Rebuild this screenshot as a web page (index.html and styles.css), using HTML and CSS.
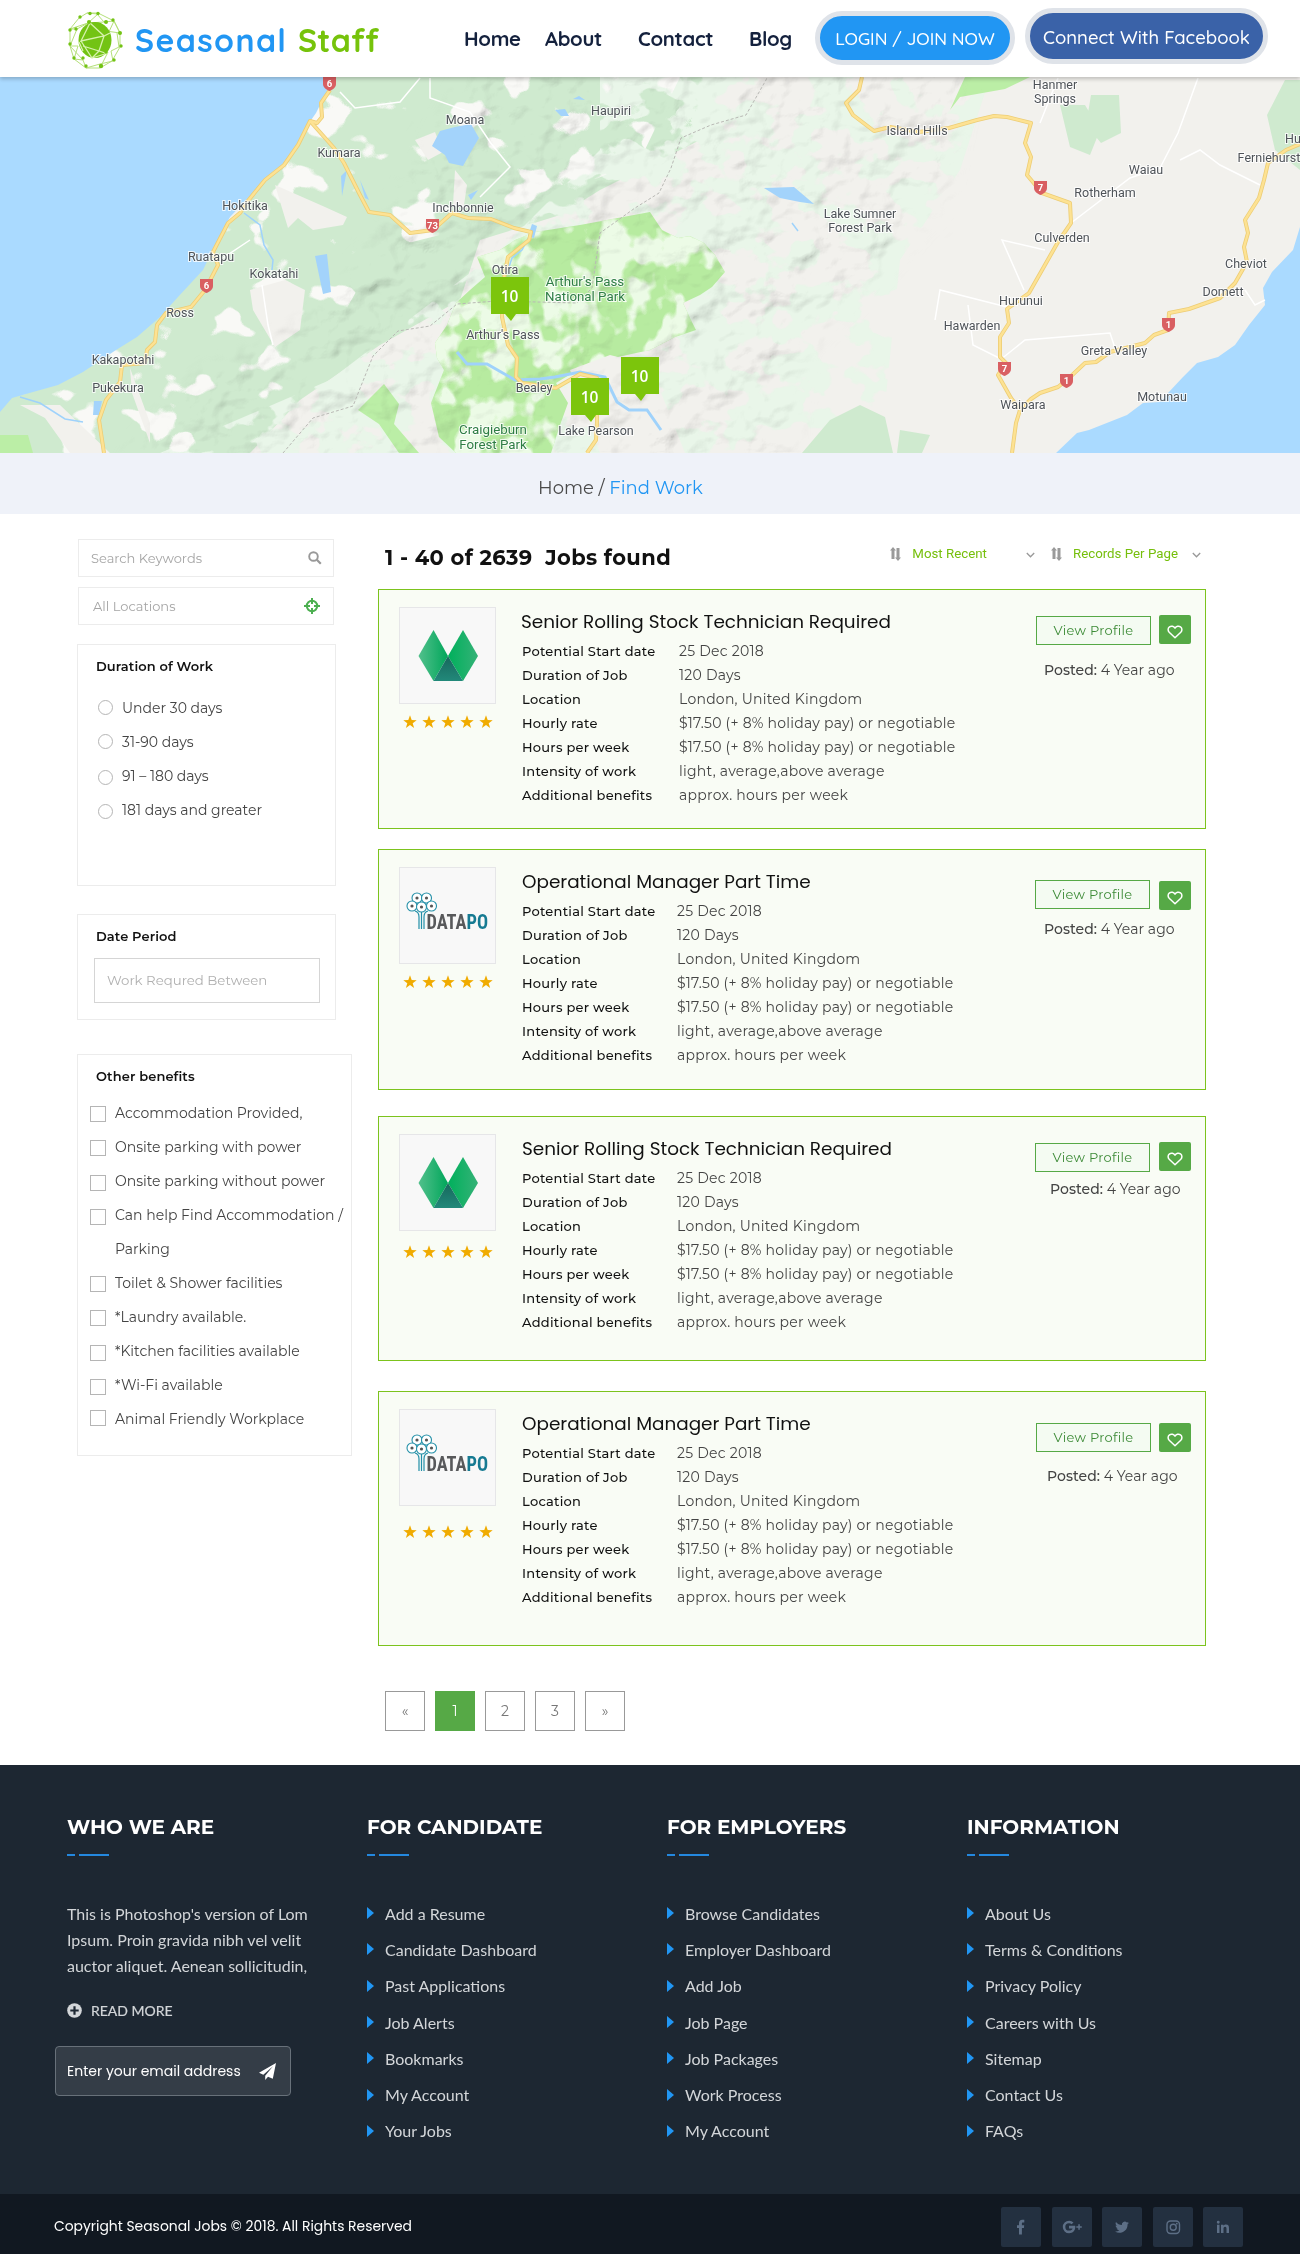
FILE: index.html
```html
<!DOCTYPE html>
<html lang="en">
<head>
<meta charset="utf-8">
<title>Seasonal Staff - Find Work</title>
<link rel="stylesheet" href="styles.css">
</head>
<body>
<svg class="defs" aria-hidden="true">
  <symbol id="star" viewBox="0 0 14 14"><path d="M7 .3L8.700 5l5 .14-4 3.060 1.410 4.760L7 10.100l-4.110 2.860L4.300 8.200l-4-3.060L5.300 5z" fill="#f0ab00"/></symbol>
  <symbol id="stars" viewBox="0 0 90 14"><use href="#star" x="0" width="14" height="14"/><use href="#star" x="19" width="14" height="14"/><use href="#star" x="38" width="14" height="14"/><use href="#star" x="57" width="14" height="14"/><use href="#star" x="76" width="14" height="14"/></symbol>
  <symbol id="heart" viewBox="0 0 16 14"><path d="M8 12.8L2.2 7.2C.5 5.4.9 2.9 2.5 1.8 4.3.6 6.7 1.100 8 3.200 9.300 1.100 11.700.6 13.500 1.800 15.100 2.900 15.500 5.400 13.800 7.200z" fill="none" stroke="#fff" stroke-width="1.5" stroke-linejoin="round"/></symbol>
  <symbol id="sort" viewBox="0 0 11 14"><path d="M3 0l3 3.500H4.500V12H1.500V3.500H0zM8 14l3-3.500H9.500V1H6.500v9.500H5z" fill="#9a9a9a"/></symbol>
  <symbol id="chev" viewBox="0 0 9 6"><path d="M.8 1l3.700 3.800L8.200 1" fill="none" stroke="#999" stroke-width="1.300"/></symbol>
  <symbol id="gem" viewBox="0 0 60 58">
    <linearGradient id="g1"><stop offset="0" stop-color="#52c08c"/><stop offset="1" stop-color="#00a65a"/></linearGradient>
    <linearGradient id="g2"><stop offset="0" stop-color="#00b05c"/><stop offset="1" stop-color="#35b277"/></linearGradient>
    <linearGradient id="g3" x2="0" y2="1"><stop offset="0" stop-color="#17675c"/><stop offset="1" stop-color="#22897a"/></linearGradient>
    <path d="M15.500 3L30 29 15.500 54 .5 29z" fill="url(#g1)"/><path d="M45 3l15 26-15 25-15-25z" fill="url(#g2)"/><path d="M30 29l15 25H15.500z" fill="url(#g3)"/>
  </symbol>
  <symbol id="tree" viewBox="0 0 84 42">
    <g fill="#fff" stroke="#2490a8" stroke-width="1.100"><circle cx="11" cy="7" r="5"/><circle cx="20.500" cy="7" r="5"/><circle cx="6" cy="15" r="5"/><circle cx="25.500" cy="15" r="5"/><circle cx="15.500" cy="16" r="5"/></g>
    <g fill="#555"><circle cx="11" cy="7" r="1.600"/><circle cx="20.500" cy="7" r="1.600"/><circle cx="6" cy="15" r="1.600"/><circle cx="25.500" cy="15" r="1.600"/><circle cx="15.500" cy="16" r="1.600"/></g>
    <path d="M9 20q4 1 4 6v12M22 20q-4 1-4 6v12M15.500 21v17" fill="none" stroke="#2490a8" stroke-width="1.200"/>
  </symbol>
  <symbol id="shield" viewBox="0 0 13 14"><path d="M0 0h13v7c0 3.500-3 5.500-6.500 7C3 12.500 0 10.500 0 7z" fill="#d95f62"/></symbol>
  <symbol id="pin" viewBox="0 0 38 44"><path d="M0 0h38v37H25l-5 7-6-7H0z" fill="#7cc50c"/></symbol>
</svg>

<header class="top">
  <svg class="brand" viewBox="0 0 320 64">
    <g transform="translate(1 4)">
      <g fill="none" stroke="#b5e07a" stroke-width="1"><path d="M19 1l-8 5L2 17v17l4 13 12 9 14 0 12-7 8-14V21L46 9 30 1z"/><path d="M19 1l11 1-10 9L2 17l7 0 11-6 16-1-7-8M36 10l10-1 6 12-14-2M2 34l8 0-4 13 9 1 3 8 14-4 13-3-2-10 8-4-2-14M9 17l-7 17 13 14M46 9l-7 15M32 56l8-16"/></g>
      <ellipse cx="27" cy="28" rx="16.500" ry="18" fill="#73c314"/>
      <g stroke="#d7f2ae" stroke-width="1.300" fill="none"><path d="M22 11l-9 18 23-5-14-13M36 24l-5 15-16-5M13 29l11 17 7-7 9 3M22 11l14 13 6-3M11 30l4 9M24 46l16-5"/></g>
      <g fill="#73c314"><circle cx="22" cy="1.500" r="1.700"/><circle cx="30" cy="1.500" r="1.700"/><circle cx="12" cy="5" r="1.700"/><circle cx="21" cy="10" r="2"/><circle cx="38" cy="10" r="2"/><circle cx="45" cy="8" r="1.700"/><circle cx="2" cy="18" r="1.700"/><circle cx="8" cy="17" r="1.700"/><circle cx="52" cy="21" r="2"/><circle cx="2" cy="32" r="1.700"/><circle cx="53" cy="34" r="1.700"/><circle cx="6" cy="46" r="1.700"/><circle cx="15" cy="46" r="1.700"/><circle cx="18" cy="54" r="1.700"/><circle cx="33" cy="54" r="2.200"/><circle cx="46" cy="48" r="1.700"/><circle cx="38" cy="40" r="1.700"/></g>
    </g>
    <text x="68" y="44" class="brand-text" textLength="151" fill="#2196f3">Seasonal</text>
    <text x="231" y="44" class="brand-text" textLength="81" fill="#76c30b">Staff</text>
  </svg>
  <nav class="nav"><a>Home</a><a>About</a><a>Contact</a><a>Blog</a></nav>
  <a class="pill login">LOGIN / JOIN NOW</a>
  <a class="pill fb">Connect With Facebook</a>
</header>

<svg class="map" viewBox="0 77 1300 376">
  <defs>
    <filter id="patch" x="0" y="0" width="100%" height="100%"><feTurbulence type="fractalNoise" baseFrequency=".022 .028" numOctaves="4" seed="8"/><feColorMatrix values="0 0 0 0 .81  0 0 0 0 .917  0 0 0 0 .81  22 0 0 0 -10.400"/><feComposite in2="SourceGraphic" operator="in"/></filter>
    <filter id="clear" x="0" y="0" width="100%" height="100%"><feTurbulence type="fractalNoise" baseFrequency=".02 .025" numOctaves="3" seed="21"/><feColorMatrix values="0 0 0 0 .949  0 0 0 0 .945  0 0 0 0 .925  25 0 0 0 -14.800"/><feComposite in2="SourceGraphic" operator="in"/></filter>
    <filter id="ridge" x="0" y="0" width="100%" height="100%"><feTurbulence type="fractalNoise" baseFrequency=".035 .03" numOctaves="3" seed="3"/><feColorMatrix values="0 0 0 0 .84  0 0 0 0 .965  0 0 0 0 .79  9 0 0 0 -4.300"/><feComposite in2="SourceGraphic" operator="in"/></filter>
    <filter id="relief" x="0" y="0" width="100%" height="100%"><feTurbulence type="fractalNoise" baseFrequency=".025 .03" numOctaves="3" seed="5"/><feColorMatrix values="0 0 0 0 0 0 0 0 0 0 0 0 0 0 0 1 0 0 0 0"/><feDiffuseLighting surfaceScale="14" diffuseConstant="1.400" lighting-color="#fff"><feDistantLight azimuth="225" elevation="52"/></feDiffuseLighting><feComposite in2="SourceGraphic" operator="in"/></filter>
    <filter id="soft"><feGaussianBlur stdDeviation="12"/></filter>
    <mask id="hills"><path filter="url(#soft)" fill="#fff" d="M480 60H970L940 200 870 280 800 350 790 470H120L200 380 300 330 380 240 420 170z"/></mask>
    <path id="pass" d="M650 212L580 225 535 232 515 240 500 250 477 257 485 277 470 290 456 303 447 325 435 343 437 358 444 370 431 403 439 437 456 453H551L560 425 568 403 556 383 589 363 618 357 650 350 675 337 696 330 690 318 683 303 700 295 712 287 725 272 715 255 704 243 690 236 678 238 662 230z"/>
    <g id="roads" fill="none" stroke-linejoin="round"><path d="M330 90l-9 13 1 14-5 6-7-2-12 24-14 20-19 15-18 22-7 11-12 10-15 29 5 13-13 25-14 17-25 6-9 12-2 17-8 8-2 13-23 2-2 17-14 18-7 20 5 33"/><path d="M310 121l24 27 10 15 15 30 10 19 21 3 20 18 23-3 19-17 16 5 23 1 23 9 17 4-2 8-21 17-5 26-1 34 6 28 9 13-1 19 6 6 34 5 24-14 17 4v45l-1 17-9 13"/><path d="M862 77l-3 13-13 13 7 12 21 16 16-4 29 5 30-4 28-8 17-4 13 1 24 6-6 20 6 14-4 18 15 18 28 10 1 20-13 19-29 51-22 16 2 14-9 14v20l6 6-8 12 13 23 9 12-4 13-4 30"/><path d="M1300 144l-14 6-18 13-4 17-5 18-14 22 3 13-4 14 3 15-12 21-15 15-31 11-20 4-1 17-14 5-9 8-35 9-14 10-11 1-16 15-11 9-18 6-9 6-11 11"/></g>
  </defs>
  <rect y="77" width="1300" height="376" fill="#f2f1ed"/>
  <path fill="#cfeacf" d="M330 77H720L700 140 600 190 560 215 480 240 460 300 380 345 300 400 250 453H0V398L160 310 245 205z"/>
  <path fill="#fff" filter="url(#patch)" d="M600 77H990L960 170 900 260 880 453H160L330 380 500 250 600 150z"/>
  <path fill="#fff" filter="url(#clear)" d="M330 77H680L640 160 500 220 380 250 300 390 190 453H0V400z"/>
  <path fill="#cfeacf" d="M1060 105l25 0 15 25-10 25-20-8zM1091 95l28 0 2 38-20 10-15-18zM1285 80h15v90l-25-20-8-35zM830 420l30-15 25 12 8 36H802zM900 430l30 5-8 18h-25z"/>
  <path fill="#bbeea6" d="M965 77h65l-25 12-45 8-10 13zM0 435l28 0 5 18H0zM358 410l26-26 15 20-5 20 25 29h-20l-20-29z"/>
  <use href="#pass" fill="#b7eba0"/>
  <use href="#pass" fill="#fff" filter="url(#ridge)"/>
  <path fill="#f2f1ed" d="M250 290l35-10 20 10-5 40-25 17-22-37zM415 140l20-8 8 20-15 8zM275 185l50 22 22 10-4 8-30 5-15-12-10 10zM455 170l12 15-3 20 25 8-36-8zM130 368l20 55 0 20-18-50zM20 405l40 0 50 48H70l-25-35zM570 370l40-15 40 10 35 88H600z"/>
  <g mask="url(#hills)" opacity=".18" style="mix-blend-mode:multiply"><rect y="77" width="1300" height="376" filter="url(#relief)"/></g>
  <path fill="#aadaff" d="M0 77H330L327 91 316 113 309 123 296 147 282 167 263 182 249 197 230 217 216 243 203 270 178 297 160 317 137 337 116 350 83 372 58 385 33 392 12 398 0 412zM1300 227L1293 250 1272 272 1263 288 1265 305 1249 325 1235 345 1218 357 1197 363 1183 377 1168 393 1160 402 1143 403 1127 415 1089 430 1077 433 1056 453H1300z"/>
  <path fill="#a3d3fb" d="M455 127l16-3 8 14-6 10-10 18-14-3-4-8-13-9 8-15zM315 256l12-2 4 38-8 2zM764 188l30-1 20 17-14-2-20-4zM468 195l10-5-7 10zM94 401h8l-3 14h-6zM341 176l6-6-5 26zM360 180l9 20-4-2zM532 224l5 2-3 12-6-2zM555 110l10-1 4 7-8 0zM573 99l6-3 6 4z"/>
  <path fill="none" stroke="#9fd2fb" stroke-width="3" d="M457 352l10 12 20 0 28 16 25-1 15-2 25-5 25 5 12 25 12 8 18 0 14 20"/>
  <path fill="none" stroke="#9fd2fb" stroke-width="1.500" d="M244 213l16 12 4 20 9 15-1 10M20 397l20 6 25 16 18 3M530 235l-8 15-10 8-5 15M792 223l6 8"/>
  <path fill="none" stroke="#fff" stroke-width="1.500" d="M340 92l15 16 45-6 10-12 10-12M430 78v20l40 14 20 30 20 25-30 30M250 240l-30 20M1058 78L1040 123M1198 78l-20 55-18 35-30 10-59 45M1180 160l20-10 20 15 40 20M1000 360l25-20 85-7 5 15M935 320l5-30 67 17M968 305l5 40 30 15M1045 250l-43-10 22 50M1245 290l10 15 10-5M262 285l6 40 5 20"/>
  <path fill="none" stroke="#b9b9b5" stroke-width="1" stroke-dasharray="3 2" d="M283 453l30-35 40-12 20-50 25-25 32-5 27-22 40-3 80 2 15-15 8-55 35-25 24-15 12-25 10-30 30-13 35-10 20-35 8-20"/>
  <use href="#roads" class="road-edge"/><use href="#roads" class="road-top"/>
  <g class="places" text-anchor="middle"><text x="465" y="124">Moana</text><text x="611" y="115">Haupiri</text><text x="339" y="157">Kumara</text><text x="245" y="210">Hokitika</text><text x="463" y="212">Inchbonnie</text><text x="211" y="261">Ruatapu</text><text x="274" y="278">Kokatahi</text><text x="505" y="274">Otira</text><text x="503" y="339">Arthur's Pass</text><text x="180" y="317">Ross</text><text x="123" y="364">Kakapotahi</text><text x="118" y="392">Pukekura</text><text x="534" y="392">Bealey</text><text x="596" y="435">Lake Pearson</text><text x="1055" y="89">Hanmer</text><text x="1055" y="103">Springs</text><text x="917" y="135">Island Hills</text><text x="1293" y="143">Hu</text><text x="1269" y="162">Ferniehurst</text><text x="1146" y="174">Waiau</text><text x="1105" y="197">Rotherham</text><text x="860" y="218">Lake Sumner</text><text x="860" y="232">Forest Park</text><text x="1062" y="242">Culverden</text><text x="1246" y="268">Cheviot</text><text x="1223" y="296">Domett</text><text x="1021" y="305">Hurunui</text><text x="972" y="330">Hawarden</text><text x="1114" y="355">Greta Valley</text><text x="1023" y="409">Waipara</text><text x="1162" y="401">Motunau</text>
    <g class="park"><text x="585" y="286">Arthur's Pass</text><text x="585" y="301">National Park</text><text x="493" y="434">Craigieburn</text><text x="493" y="449">Forest Park</text></g></g>
  <use href="#shield" x="323" y="77" width="13" height="14"/><use href="#shield" x="425" y="219" width="15" height="14"/><use href="#shield" x="200" y="279" width="13" height="14"/><use href="#shield" x="1034" y="181" width="13" height="14"/><use href="#shield" x="998" y="362" width="13" height="14"/><use href="#shield" x="1162" y="318" width="13" height="14"/><use href="#shield" x="1060" y="374" width="13" height="14"/>
  <g class="route" text-anchor="middle"><text x="329.500" y="87">6</text><text x="432.500" y="228.500">73</text><text x="206.500" y="288.500">6</text><text x="1040.500" y="190.500">7</text><text x="1004.500" y="371.500">7</text><text x="1168.500" y="327.500">1</text><text x="1066.500" y="383.500">1</text></g>
  <use href="#pin" x="491" y="277" width="38" height="44"/><use href="#pin" x="571" y="378" width="38" height="44"/><use href="#pin" x="621" y="357" width="38" height="44"/>
  <g class="pin-text" text-anchor="middle"><text x="509.500" y="302">10</text><text x="589.500" y="403">10</text><text x="639.500" y="382">10</text></g>
</svg>

<div class="crumbs">Home / <a>Find Work</a></div>

<main class="page">
  <aside class="side">
    <div class="field"><span>Search Keywords</span><svg width="14" height="14" viewBox="0 0 14 14"><circle cx="5.500" cy="5.500" r="4.300" fill="none" stroke="#999" stroke-width="1.900"/><path d="M8.800 8.800l4 4" stroke="#999" stroke-width="2.200"/></svg></div>
    <div class="field loc"><span>All Locations</span><svg width="16" height="16" viewBox="0 0 16 16"><circle cx="8" cy="8" r="5.200" fill="none" stroke="#4caf50" stroke-width="2"/><path d="M8 0v6M8 10v6M0 8h6M10 8h6" stroke="#4caf50" stroke-width="2"/></svg></div>
    <section class="box duration"><h3>Duration of Work</h3>
      <ul><li><i></i>Under 30 days</li><li><i></i>31-90 days</li><li class="drop"><i></i>91 – 180 days</li><li class="drop"><i></i>181 days and greater</li></ul></section>
    <section class="box period"><h3>Date Period</h3><div class="date">Work Requred Between</div></section>
    <section class="box benefits"><h3>Other benefits</h3>
      <ul><li><i></i>Accommodation Provided,</li><li><i></i>Onsite parking with power</li><li class="drop"><i></i>Onsite parking without power</li><li class="drop"><i></i><span>Can help Find Accommodation /<br>Parking</span></li><li><i></i>Toilet &amp; Shower facilities</li><li><i></i>*Laundry available.</li><li class="drop"><i></i>*Kitchen facilities available</li><li class="drop"><i></i>*Wi-Fi available</li><li class="lift"><i></i>Animal Friendly Workplace</li></ul></section>
  </aside>

  <div class="results">
    <div class="bar"><h1>1 - 40 of 2639&nbsp; Jobs found</h1>
      <div class="sort"><svg width="11" height="14"><use href="#sort"/></svg><span>Most Recent</span><svg class="c1" width="9" height="6"><use href="#chev"/></svg><svg width="11" height="14"><use href="#sort"/></svg><span>Records Per Page</span><svg class="c2" width="9" height="6"><use href="#chev"/></svg></div></div>

    <article class="card one">
      <div class="pic"><div class="thumb"><svg width="60" height="58"><use href="#gem"/></svg></div><svg class="stars" width="90" height="14"><use href="#stars"/></svg></div>
      <div class="info"><h2>Senior Rolling Stock Technician Required</h2><dl><dt>Potential Start date</dt><dd>25 Dec 2018</dd><dt>Duration of Job</dt><dd>120 Days</dd><dt>Location</dt><dd>London, United Kingdom</dd><dt>Hourly rate</dt><dd>$17.50 (+ 8% holiday pay) or negotiable</dd><dt>Hours per week</dt><dd>$17.50 (+ 8% holiday pay) or negotiable</dd><dt>Intensity of work</dt><dd>light, average,above average</dd><dt>Additional benefits</dt><dd>approx. hours per week</dd></dl></div>
      <div class="act"><div class="btns"><a class="view">View Profile</a><a class="like"><svg width="16" height="14"><use href="#heart"/></svg></a></div><p><b>Posted:</b> 4 Year ago</p></div>
    </article>
    <article class="card two">
      <div class="pic"><div class="thumb"><svg class="datapo" width="84" height="42"><use href="#tree"/><text x="20.500" y="38" textLength="61.500" lengthAdjust="spacingAndGlyphs">DATA<tspan fill="#167a92">PO</tspan></text></svg></div><svg class="stars" width="90" height="14"><use href="#stars"/></svg></div>
      <div class="info"><h2>Operational Manager Part Time</h2><dl><dt>Potential Start date</dt><dd>25 Dec 2018</dd><dt>Duration of Job</dt><dd>120 Days</dd><dt>Location</dt><dd>London, United Kingdom</dd><dt>Hourly rate</dt><dd>$17.50 (+ 8% holiday pay) or negotiable</dd><dt>Hours per week</dt><dd>$17.50 (+ 8% holiday pay) or negotiable</dd><dt>Intensity of work</dt><dd>light, average,above average</dd><dt>Additional benefits</dt><dd>approx. hours per week</dd></dl></div>
      <div class="act"><div class="btns"><a class="view">View Profile</a><a class="like"><svg width="16" height="14"><use href="#heart"/></svg></a></div><p><b>Posted:</b> 4 Year ago</p></div>
    </article>
    <article class="card three">
      <div class="pic"><div class="thumb"><svg width="60" height="58"><use href="#gem"/></svg></div><svg class="stars" width="90" height="14"><use href="#stars"/></svg></div>
      <div class="info"><h2>Senior Rolling Stock Technician Required</h2><dl><dt>Potential Start date</dt><dd>25 Dec 2018</dd><dt>Duration of Job</dt><dd>120 Days</dd><dt>Location</dt><dd>London, United Kingdom</dd><dt>Hourly rate</dt><dd>$17.50 (+ 8% holiday pay) or negotiable</dd><dt>Hours per week</dt><dd>$17.50 (+ 8% holiday pay) or negotiable</dd><dt>Intensity of work</dt><dd>light, average,above average</dd><dt>Additional benefits</dt><dd>approx. hours per week</dd></dl></div>
      <div class="act"><div class="btns"><a class="view">View Profile</a><a class="like"><svg width="16" height="14"><use href="#heart"/></svg></a></div><p><b>Posted:</b> 4 Year ago</p></div>
    </article>
    <article class="card four">
      <div class="pic"><div class="thumb"><svg class="datapo" width="84" height="42"><use href="#tree"/><text x="20.500" y="38" textLength="61.500" lengthAdjust="spacingAndGlyphs">DATA<tspan fill="#167a92">PO</tspan></text></svg></div><svg class="stars" width="90" height="14"><use href="#stars"/></svg></div>
      <div class="info"><h2>Operational Manager Part Time</h2><dl><dt>Potential Start date</dt><dd>25 Dec 2018</dd><dt>Duration of Job</dt><dd>120 Days</dd><dt>Location</dt><dd>London, United Kingdom</dd><dt>Hourly rate</dt><dd>$17.50 (+ 8% holiday pay) or negotiable</dd><dt>Hours per week</dt><dd>$17.50 (+ 8% holiday pay) or negotiable</dd><dt>Intensity of work</dt><dd>light, average,above average</dd><dt>Additional benefits</dt><dd>approx. hours per week</dd></dl></div>
      <div class="act"><div class="btns"><a class="view">View Profile</a><a class="like"><svg width="16" height="14"><use href="#heart"/></svg></a></div><p><b>Posted:</b> 4 Year ago</p></div>
    </article>
    <div class="pager"><a>«</a><a class="on">1</a><a>2</a><a>3</a><a>»</a></div>
  </div>
</main>

<footer class="foot">
  <section><h4>WHO WE ARE</h4><div class="rule"><i></i><i></i></div>
    <p>This is Photoshop's version of Lom<br>Ipsum. Proin gravida nibh vel velit<br>auctor aliquet. Aenean sollicitudin,</p>
    <a class="more"><svg width="15" height="15" viewBox="0 0 15 15"><circle cx="7.500" cy="7.500" r="7.300" fill="#d3d6d9"/><path d="M7.500 3.300v8.400M3.300 7.500h8.400" stroke="#1d2732" stroke-width="2.200"/></svg>READ MORE</a>
    <div class="email"><span>Enter your email address</span><svg width="17" height="17" viewBox="0 0 17 17"><path d="M17 0L0 9.800l4.300 2L14 3.200 6.200 12.700V17l2.800-3.200 4.800 2z" fill="#fff"/></svg></div></section>
  <section><h4>FOR CANDIDATE</h4><div class="rule"><i></i><i></i></div><ul><li>Add a Resume</li><li>Candidate Dashboard</li><li>Past Applications</li><li>Job Alerts</li><li>Bookmarks</li><li>My Account</li><li>Your Jobs</li></ul></section>
  <section><h4>FOR EMPLOYERS</h4><div class="rule"><i></i><i></i></div><ul><li>Browse Candidates</li><li>Employer Dashboard</li><li>Add Job</li><li>Job Page</li><li>Job Packages</li><li>Work Process</li><li>My Account</li></ul></section>
  <section><h4>INFORMATION</h4><div class="rule"><i></i><i></i></div><ul><li>About Us</li><li>Terms &amp; Conditions</li><li>Privacy Policy</li><li>Careers with Us</li><li>Sitemap</li><li>Contact Us</li><li>FAQs</li></ul></section>
</footer>
<div class="legal"><span>Copyright Seasonal Jobs © 2018. All Rights Reserved</span>
  <div class="social">
    <a><svg viewBox="0 0 20 20"><path d="M8 17.500V11H6V8.300h2V6.200C8 4 9.200 2.800 11.200 2.800h2.100v2.600h-1.400c-.8 0-1 .4-1 1v1.900h2.300L12.900 11h-2v6.500z"/></svg></a>
    <a><svg viewBox="0 0 20 20"><path d="M7 8.800v2.600h3.600c-.4 1.400-1.600 2.200-3.500 2.200A3.700 3.700 0 0 1 3.300 10a3.700 3.700 0 0 1 3.800-3.700c1 0 1.800.4 2.500 1l1.900-1.900A6.300 6.300 0 0 0 7.100 3.700a6.300 6.300 0 0 0 0 12.600c3.700 0 6.200-2.600 6.200-6.200 0-.5 0-.9-.1-1.300zM16.300 7.200h1.500v2h2v1.600h-2v2h-1.500v-2h-2V9.200h2z"/></svg></a>
    <a><svg viewBox="0 0 20 20"><path d="M17 5.700c-.5.300-1 .4-1.600.5.600-.4 1-.9 1.200-1.500-.6.300-1.200.6-1.800.7A2.900 2.900 0 0 0 9.900 8C7.500 7.900 5.400 6.800 4 5c-.8 1.300-.4 3 .9 3.800-.5 0-.9-.1-1.300-.4 0 1.400 1 2.600 2.300 2.900-.4.100-.8.100-1.300 0 .4 1.200 1.400 2 2.700 2A5.800 5.800 0 0 1 3 14.500c4.800 3 12.700.4 12.600-7.300.6-.4 1-.9 1.400-1.500z"/></svg></a>
    <a><svg viewBox="0 0 20 20"><g fill="none" stroke="#5d6f86" stroke-width="1.400"><rect x="4" y="4" width="12.500" height="12.500" rx="3.500"/><circle cx="10.250" cy="10.250" r="3"/></g><circle cx="13.800" cy="6.700" r=".9"/></svg></a>
    <a><svg viewBox="0 0 20 20"><path d="M4 7.700h2.500V16H4zM5.250 3.800a1.450 1.450 0 1 1 0 2.900 1.450 1.450 0 0 1 0-2.900zM8 7.700h2.400v1.100c.4-.7 1.200-1.300 2.500-1.300 2.600 0 3.100 1.700 3.100 3.900V16h-2.500v-4.100c0-1 0-2.200-1.400-2.200s-1.600 1-1.600 2.100V16H8z"/></svg></a>
  </div></div>
</body>
</html>
```
FILE: styles.css
```css
* { box-sizing: border-box; margin: 0; padding: 0; }
body { width: 1300px; background: #fff; font-family: Montserrat, Inter, sans-serif; color: #333; }
ul { list-style: none; }
.defs { position: absolute; width: 0; height: 0; }

.top { height: 77px; display: flex; background: #fff; position: relative; z-index: 2; box-shadow: 0 2px 4px rgba(0,0,0,.22); padding-left: 67px; }
.brand { width: 320px; height: 64px; margin-top: 8px; flex: none; }
.brand-text { font: 700 32px Quicksand, Lato, sans-serif; }
.nav { display: flex; margin-left: 77px; padding-top: 26px; width: 351px; font: 700 20.3px/26px Quicksand, Lato, sans-serif; letter-spacing: -.3px; color: #14213d; }
.nav a:nth-child(1) { width: 81px; }
.nav a:nth-child(2) { width: 93px; }
.nav a:nth-child(3) { width: 111px; }
.pill { flex: none; border: 5px solid #dfe3e9; border-radius: 28px; color: #fff; text-align: center; font: 500 17.5px/44px Quicksand, Lato, sans-serif; white-space: nowrap; }
.login { width: 200px; height: 54px; margin-top: 11px; background: #2196f3; }
.fb { width: 243px; height: 56px; margin: 8px 0 0 10px; background: #3a62a8; font-size: 18.5px; line-height: 48px; }

.map { display: block; width: 1300px; height: 376px; }
.road-edge { stroke: #edcd75; stroke-width: 4px; }
.road-top { stroke: #fde293; stroke-width: 2.4px; }
.places { font: 12.5px Roboto, sans-serif; fill: #4e5358; paint-order: stroke; stroke: rgba(255,255,255,.8); stroke-width: 2px; }
.park { font-size: 13.3px; fill: #2e7d44; }
.route { font: bold 9.5px Roboto, sans-serif; fill: #fff; }
.pin-text { font: 600 15.5px "Open Sans", Inter, sans-serif; fill: #fff; }
.datapo text { font: bold 20.5px "Roboto Condensed", Roboto, sans-serif; fill: #58595b; }

.crumbs { height: 61px; background: #eff2f9; padding-left: 538px; font-size: 18px; line-height: 70px; color: #4a4a4a; }
.crumbs a { color: #2196f3; }

.page { height: 1251px; display: grid; grid-template-columns: 301px 828px; padding-left: 77px; }
.side { padding-top: 25px; }
.field { width: 256px; height: 38px; margin: 0 0 10px 1px; border: 1px solid #ececec; padding: 0 11px 0 12px; display: flex; align-items: center; justify-content: space-between; font-size: 13px; color: #a5a5a5; }
.loc { padding: 0 13px 0 14px; margin-bottom: 19px; }
.box { border: 1px solid #ececec; width: 259px; padding-left: 18px; }
.box h3 { font-size: 13px; font-weight: 600; line-height: 20px; letter-spacing: .1px; color: #111; }
.box li { display: flex; align-items: flex-start; font-size: 14px; font-weight: 400; line-height: 34px; white-space: nowrap; color: #444; }
.box i { flex: none; border: 1px solid #b5b5b5; }
.duration { height: 242px; padding-top: 11px; margin-bottom: 28px; }
.duration ul { padding-top: 15px; }
.duration i { width: 15px; height: 15px; border-radius: 50%; margin: 9px 9px 0 2px; }
.box .drop i { margin-top: 11px; }
.period { height: 106px; padding: 11px 0 0 18px; margin-bottom: 34px; }
.date { width: 226px; height: 45px; border: 1px solid #d5d5d5; margin: 12px 0 0 -2px; padding-left: 12px; font-size: 13.3px; line-height: 43px; color: #b0b0b0; }
.benefits { width: 275px; height: 402px; padding-top: 11px; }
.benefits ul { padding-top: 10px; margin-left: -6px; }
.benefits i { width: 16px; height: 16px; margin: 10px 9px 0 0; }
.box .lift i { margin-top: 8px; }

.bar { height: 75px; display: flex; justify-content: space-between; padding: 0 5px 0 7px; }
.bar h1 { font-size: 21px; font-weight: 700; line-height: 87px; color: #111; letter-spacing: .38px; }
.sort { display: flex; align-items: center; height: 79px; font: 400 13.3px Roboto, sans-serif; color: #76bf0c; white-space: nowrap; }
.sort span { margin-left: 11px; }
.sort .c1 { margin: 3px 16px 0 39px; }
.sort .c2 { margin: 3px 0 0 14px; }

.card { border: 1px solid #7cc31d; background: #f9fcf5; display: grid; grid-template-columns: 143px 514px 1fr; }
.one { height: 240px; margin-bottom: 20px; }
.two { height: 241px; margin-bottom: 26px; }
.three { height: 245px; margin-bottom: 30px; }
.four { height: 255px; }
.pic { padding: 17px 0 0 20px; }
.thumb { width: 97px; height: 97px; border: 1px solid #e6e6e8; background: #f8f8f8; display: flex; align-items: center; justify-content: center; }
.thumb svg { display: block; flex: none; }
.thumb .datapo { margin-top: -8px; }
.stars { display: block; margin: 11px 0 0 4px; }
.three .stars { margin-top: 14px; }
.four .stars { margin-top: 19px; }
.info { padding-top: 16px; }
.info h2 { font: 400 18.400px/32px Poppins, Inter, sans-serif; color: #111; white-space: nowrap; }
.one h2 { margin-left: -1px; }
.info dl { display: grid; grid-template-columns: 155px 1fr; line-height: 24px; padding-top: 1px; }
.one dl { grid-template-columns: 157px 1fr; }
.info dt { font-size: 13px; font-weight: 500; letter-spacing: .25px; color: #111; white-space: nowrap; }
.info dd { font-size: 14px; letter-spacing: .25px; color: #444; height: 24px; white-space: nowrap; }
.act { padding-top: 26px; }
.btns { display: flex; gap: 8px; }
.view { width: 115px; height: 29px; border: 1px solid #56a946; background: #f4fbf2; color: #3d8b37; text-align: center; font-size: 13px; line-height: 27px; letter-spacing: .3px; }
.like { width: 32px; height: 29px; border-radius: 2px; background: #56a946; display: flex; align-items: center; justify-content: center; padding-top: 4px; margin-top: -1px; }
.act p { font-size: 14px; line-height: 20px; color: #444; white-space: nowrap; margin: 15px 0 0 8px; letter-spacing: .05px; }
.act b { font-weight: 500; }
.two .act { padding-top: 30px; }
.two .btns, .three .btns { margin-left: -1px; gap: 9px; }
.two .like { margin-top: 1px; }
.two .act p { margin-top: 9px; }
.three .act p { margin: 7px 0 0 14px; }
.four .act { padding-top: 31px; }
.four .like { margin-top: 0; }
.four .act p { margin: 14px 0 0 11px; }

.pager { display: flex; gap: 10px; padding: 45px 0 0 7px; }
.pager a { width: 40px; height: 40px; border: 1px solid #999; text-align: center; font-size: 14px; line-height: 38px; color: #777; }
.pager .on { background: #56a946; border-color: #56a946; color: #fff; }

.foot { height: 429px; background: #1d2732; padding-left: 67px; display: grid; grid-template-columns: repeat(4, 300px); align-content: start; color: #d3d6d9; font-family: Lato, sans-serif; overflow: hidden; }
.foot h4 { font: 700 20px/24px Montserrat, Inter, sans-serif; color: #fff; margin-top: 50px; }
.rule { display: flex; gap: 4px; margin-top: 15px; }
.rule i { width: 8px; height: 2px; background: #2488df; }
.rule i + i { width: 30px; }
.foot ul { margin-top: 39px; }
.foot li { display: flex; align-items: center; gap: 11px; height: 36.300px; font-size: 16px; }
.foot li::before { content: ""; border: solid transparent; border-width: 6px 0 6px 7px; border-left-color: #2196f3; }
.foot p { margin-top: 45px; font-size: 16px; line-height: 26px; white-space: nowrap; }
.more { display: flex; align-items: center; gap: 9px; height: 20px; margin-top: 21px; font-size: 14px; -webkit-text-stroke: .2px; }
.email { width: 236px; height: 50px; margin: 26px 0 0 -12px; border: 1px solid #68717a; border-radius: 4px; background: #343d47; display: flex; align-items: center; justify-content: space-between; padding: 0 14px 0 11px; color: #fff; font: 14px Poppins, Inter, sans-serif; }
.legal { height: 60px; background: #111821; display: flex; justify-content: space-between; padding: 0 57px 0 54px; color: #fff; font: 13.900px/65px Poppins, Inter, sans-serif; }
.social { display: flex; gap: 10.500px; padding-top: 13px; }
.social a { width: 40px; height: 40px; border-radius: 2px; background: #233040; display: flex; align-items: center; justify-content: center; }
.social svg { width: 20px; height: 20px; fill: #5d6f86; }
```
